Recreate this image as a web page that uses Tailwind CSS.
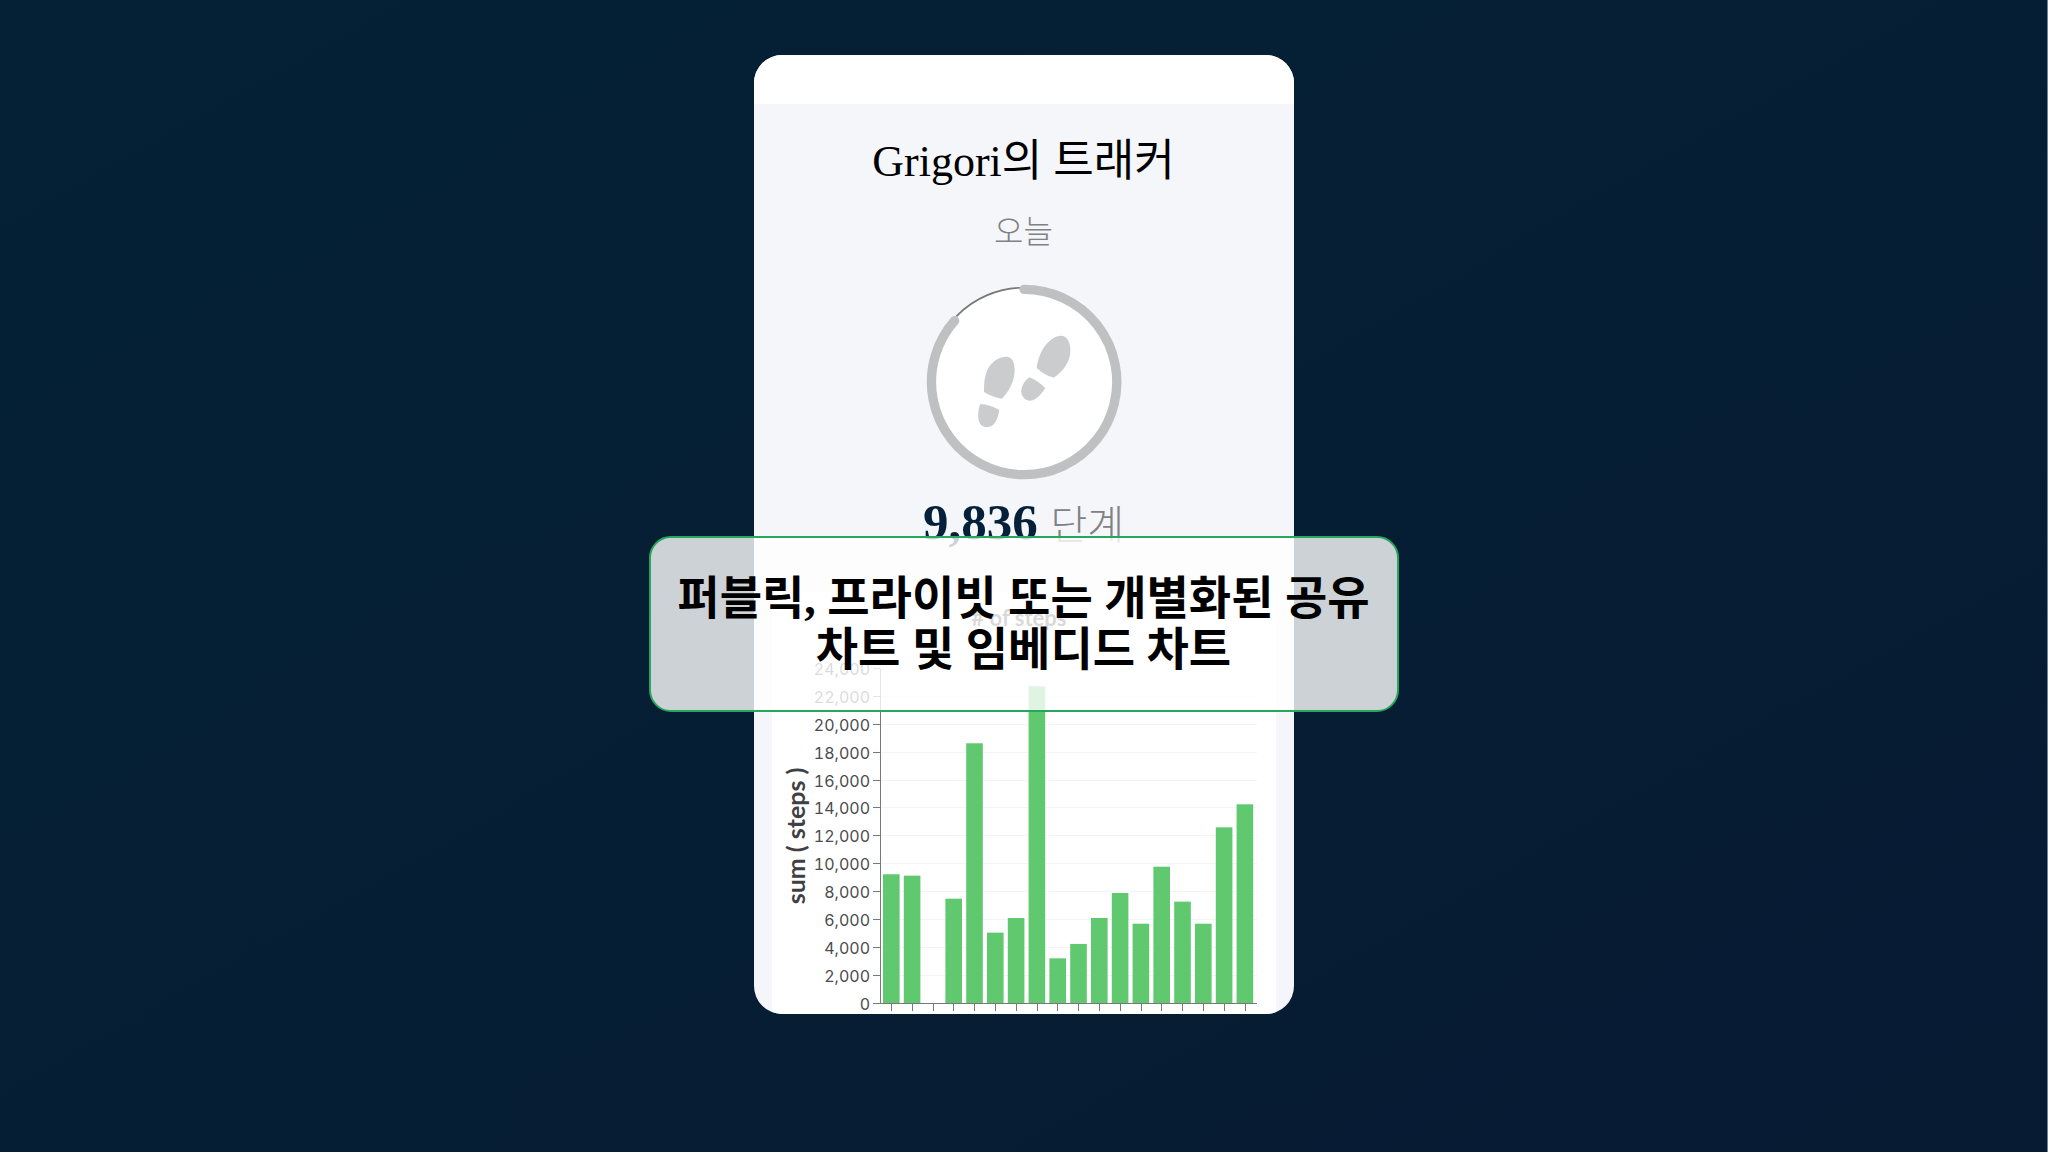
<!DOCTYPE html>
<html lang="ko">
<head>
    <meta charset="UTF-8">
    <meta name="viewport" content="width=device-width, initial-scale=1.0">
    <script src="https://cdn.jsdelivr.net/npm/@tailwindcss/browser@4"></script>
    <title>Grigori의 트래커</title>
</head>
<body class="min-h-screen border-r border-[#6f8496] bg-linear-to-br from-[#042135] to-[#071b33] font-['Liberation_Serif','Noto_Sans_CJK_KR',serif]">
    <main class="relative flex justify-center pt-[55px] pb-12">

        <!-- Phone card -->
        <section class="w-full max-w-[540px] overflow-hidden rounded-[28px] bg-[#f5f6f9] text-center">
            <div class="h-[49px] bg-white"></div>
            <h1 class="mt-[30px] text-[44px] leading-[56px] text-black">Grigori의 트래커</h1>
            <h2 class="mt-[22px] text-[32px] leading-[40px] font-light text-[#808184]">오늘</h2>

            <!-- Step goal ring -->
            <svg class="mx-auto mt-[30px] block size-[200px]" viewBox="71 66 600 600" role="img" aria-label="steps">
                <circle cx="371" cy="366" r="280" fill="#ffffff"/>
                <path d="M168 169A283 283 0 0 1 371 83" fill="none" stroke="#77777a" stroke-width="5"/>
                <path d="M371 88A278 278 0 1 1 163 182" fill="none" stroke="#bfc0c1" stroke-width="28" stroke-linecap="round"/>
                <g fill="#cbccce">
                    <path d="M318 290C335 291 343 306 343 330C343 362 327 394 305 416Q276 412 251 396C251 366 253 343 265 323C277 303 297 290 318 290Z"/>
                    <path d="M240 432Q268 434 297 450C294 469 288 486 278 495C267 504 248 504 240 492C231 479 232 451 240 432Z"/>
                    <path d="M484 227C502 229 511 248 510 275C509 305 488 334 460 353Q431 345 409 324C413 297 421 273 438 253C451 237 467 226 484 227Z"/>
                    <path d="M387 352Q413 362 435 385C424 402 410 416 397 421C383 426 369 417 364 403C359 387 370 363 387 352Z"/>
                </g>
            </svg>

            <p class="mt-2 h-[102px] text-[51px] leading-[64px] font-bold text-[#04203a]">9,836 <span class="text-[40px] font-light text-[#808184]">단계</span></p>

            <!-- Chart -->
            <div class="mx-[18px] bg-white">
                <svg id="stepsChart" class="block w-full font-[Inter,sans-serif]" viewBox="0 0 504 422" role="img" aria-label="# of steps">
                    <text x="247" y="34" text-anchor="middle" class="font-[Lato,sans-serif] text-[22px] font-bold" fill="#3f4044"># of steps</text>
                    <text transform="translate(33 244) rotate(-90)" text-anchor="middle" class="font-[Lato,sans-serif] text-[25px] font-bold" fill="#3f4044">sum ( steps )</text>
                    <g id="grid" stroke="#f3f4f5" stroke-width="1"></g>
                    <g id="bars" fill="#60c86f"></g>
                    <g id="axis" stroke="#77787a" stroke-width="1"></g>
                    <g id="labels" class="text-[16px] tabular-nums" fill="#4b4c50" text-anchor="end"></g>
                </svg>
            </div>
        </section>

        <!-- Caption over the card -->
        <div class="absolute inset-x-0 top-[536px] mx-auto flex h-[176px] w-full max-w-[750px] items-center justify-center rounded-[22px] border-2 border-[#27a75c] bg-white/80 text-center">
            <p class="text-[46px] leading-[51px] font-bold text-black">퍼블릭, 프라이빗 또는 개별화된 공유<br>차트 및 임베디드 차트</p>
        </div>
    </main>

<script>
    const steps = [9290, 9190, 0, 7540, 18670, 5110, 6160, 22750, 3270, 4300, 6160, 7950, 5750, 9830, 7330, 5750, 12650, 14300];
    const left = 108, right = 485, base = 412;
    const perStep = 27.93 / 2000;
    const slot = 20.8;

    function add(parent, tag, attrs) {
        const el = document.createElementNS("http://www.w3.org/2000/svg", tag);
        for (const key in attrs) el.setAttribute(key, attrs[key]);
        document.getElementById(parent).appendChild(el);
        return el;
    }

    // y axis ticks, grid lines and labels
    for (let v = 0; v <= 24000; v += 2000) {
        const y = Math.round(base - v * perStep) - 0.5;
        if (v > 0) add("grid", "line", { x1: left, x2: right, y1: y, y2: y });
        add("axis", "line", { x1: left - 7, x2: left, y1: y, y2: y });
        add("labels", "text", { x: left - 10, y: y + 6 }).textContent = v.toLocaleString("en-US");
    }
    add("axis", "line", { x1: left + 0.5, x2: left + 0.5, y1: base - 24000 * perStep, y2: base });
    add("axis", "line", { x1: left, x2: right, y1: base - 0.5, y2: base - 0.5 });

    // one bar and one x tick per day
    steps.forEach((value, i) => {
        const x = left + 3 + i * slot;
        add("bars", "rect", { x: x, y: base - value * perStep, width: 16.6, height: value * perStep });
        const mid = Math.round(x + 8) + 0.5;
        add("axis", "line", { x1: mid, x2: mid, y1: base, y2: base + 7 });
    });
</script>
</body>
</html>
